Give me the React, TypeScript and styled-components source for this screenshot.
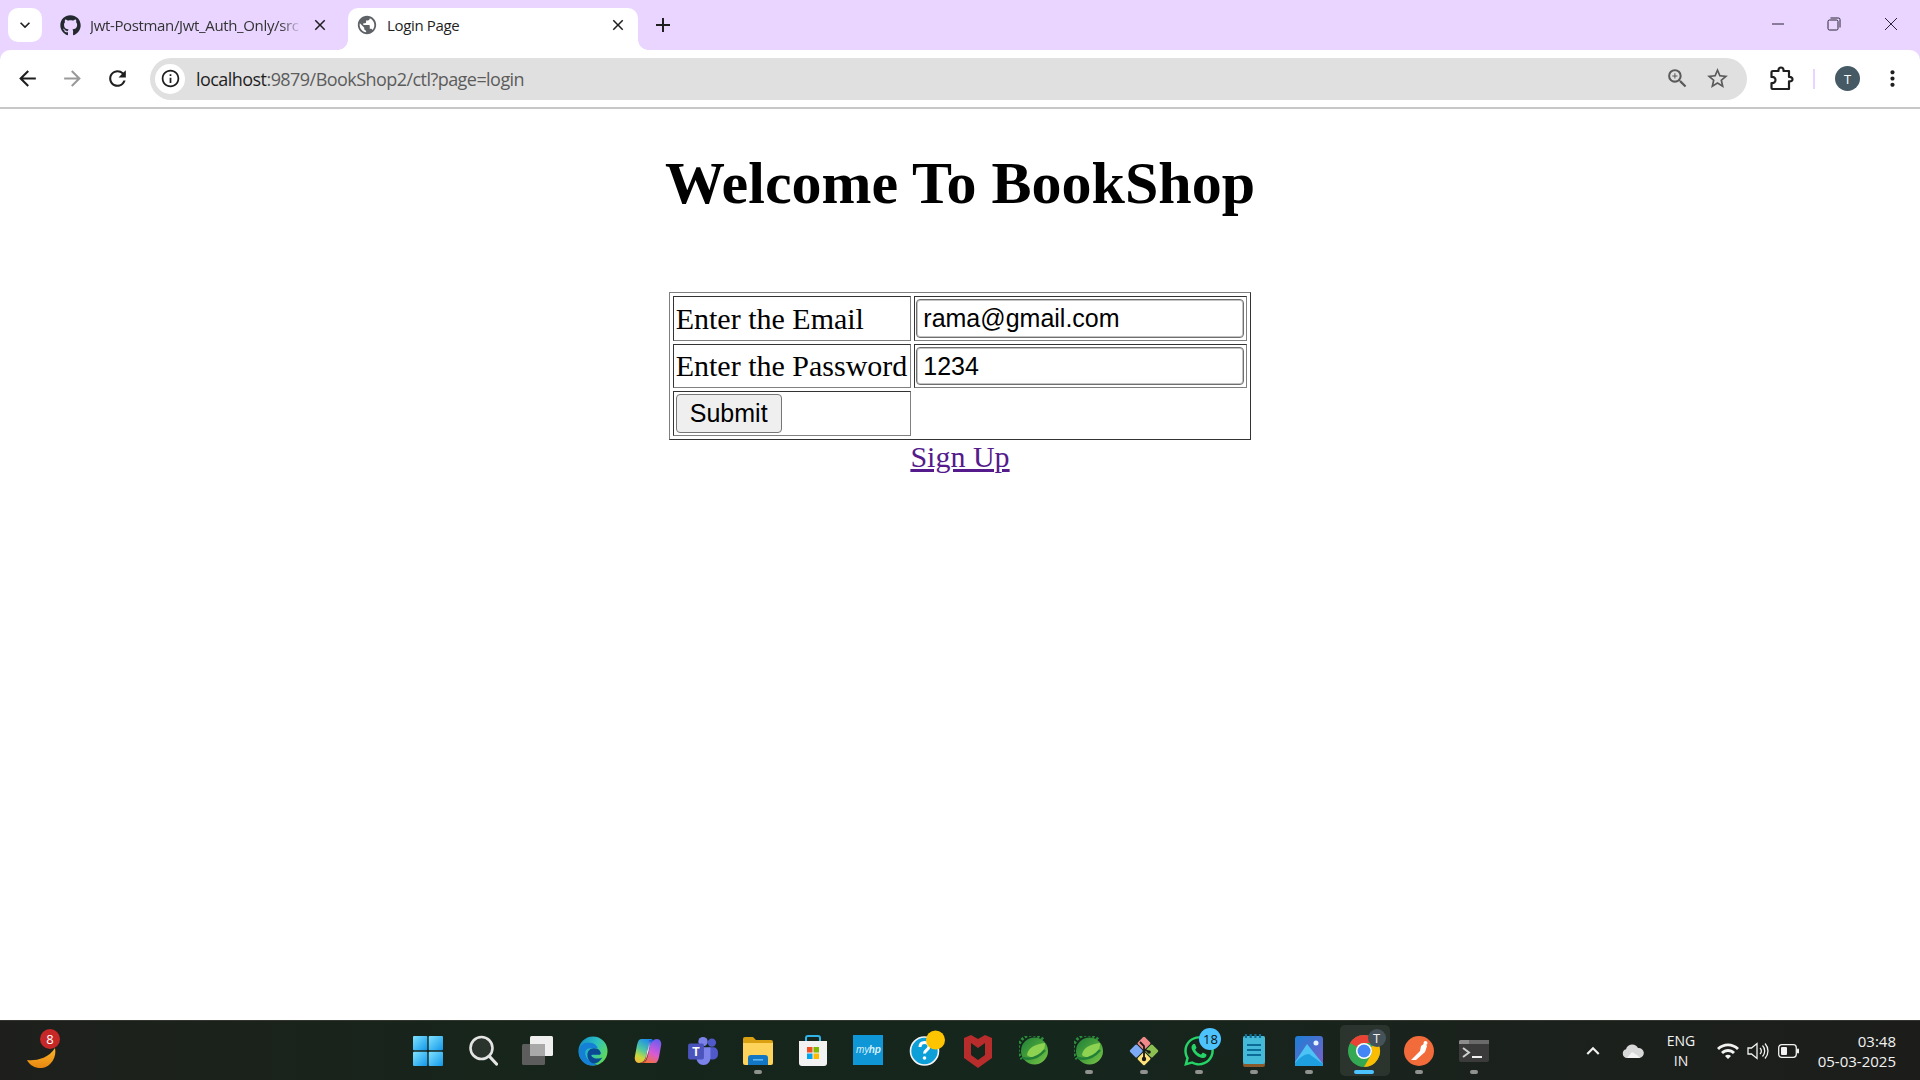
import React from 'react'
import styled, { createGlobalStyle } from 'styled-components'
import { FaGithub, FaWhatsapp } from 'react-icons/fa'
import {
  MdAdd,
  MdArrowBack,
  MdArrowForward,
  MdClose,
  MdInfoOutline,
  MdKeyboardArrowDown,
  MdKeyboardArrowUp,
  MdMoreVert,
  MdPublic,
  MdRefresh,
  MdStarBorder,
  MdWifi,
  MdZoomIn,
} from 'react-icons/md'

const UI_FONT = `"Open Sans", "Noto Sans", "Liberation Sans", sans-serif`

const GlobalStyle = createGlobalStyle`
  html, body {
    margin: 0;
    padding: 0;
    height: 100%;
    overflow: hidden;
    background: #fff;
  }
  #root {
    height: 100%;
  }
`

const Screen = styled.div`
  display: flex;
  flex-direction: column;
  height: 1080px;
  width: 1920px;
  background: #e9d5ff;
`

const TabStrip = styled.div`
  display: flex;
  align-items: flex-end;
  height: 50px;
  flex: none;
  padding-left: 8px;
  font-family: ${UI_FONT};
`

const TabSearch = styled.div`
  display: flex;
  align-items: center;
  justify-content: center;
  width: 34px;
  height: 34px;
  margin-bottom: 8px;
  border-radius: 10px;
  background: #fff;
  color: #1f1f1f;
  font-size: 20px;
`

const InactiveTab = styled.div`
  display: flex;
  align-items: center;
  width: 306px;
  height: 42px;
  padding: 0 19px 8px 18px;
  box-sizing: border-box;
  color: #333;
  font-size: 15px;
`

const ActiveTab = styled.div`
  position: relative;
  display: flex;
  align-items: center;
  width: 290px;
  height: 42px;
  padding: 0 11px 8px 8px;
  box-sizing: border-box;
  background: #fff;
  border-radius: 10px 10px 0 0;
  color: #1f1f1f;
  font-size: 15px;
  &::before,
  &::after {
    content: '';
    position: absolute;
    bottom: 0;
    width: 10px;
    height: 10px;
  }
  &::before {
    left: -10px;
    background: radial-gradient(circle at 0 0, transparent 9.5px, #fff 10px);
  }
  &::after {
    right: -10px;
    background: radial-gradient(circle at 100% 0, transparent 9.5px, #fff 10px);
  }
`

const TabLabel = styled.span`
  flex: 1;
  min-width: 0;
  margin-left: 9px;
  white-space: nowrap;
  letter-spacing: -0.35px;
`

const FadedTabLabel = styled(TabLabel)`
  mask-image: linear-gradient(to right, #000 86%, transparent 96%);
`

const NewTab = styled.div`
  display: flex;
  align-items: center;
  justify-content: center;
  width: 30px;
  height: 30px;
  margin: 0 0 10px 10px;
  font-size: 24px;
  color: #1f1f1f;
`

const WindowControls = styled.div`
  display: flex;
  margin-left: auto;
  align-self: flex-start;
  padding-top: 8px;
`

const WindowButton = styled.div`
  display: flex;
  align-items: center;
  justify-content: center;
  width: 56px;
  height: 32px;
  &:last-child {
    width: 58px;
  }
`

const Toolbar = styled.div`
  display: flex;
  align-items: center;
  flex: none;
  height: 59px;
  box-sizing: border-box;
  border-bottom: 2px solid #c7c7c7;
  background: #fff;
  border-radius: 10px 10px 0 0;
  padding-left: 5px;
  font-family: ${UI_FONT};
`

const NavButton = styled.div<{ $dim?: boolean }>`
  display: flex;
  align-items: center;
  justify-content: center;
  width: 45px;
  height: 42px;
  font-size: 25px;
  color: ${({ $dim }) => ($dim ? '#9a9a9a' : '#1f1f1f')};
`

const Omnibox = styled.div`
  display: flex;
  align-items: center;
  width: 1597px;
  height: 42px;
  margin-left: 10px;
  padding: 0 10px 0 5px;
  box-sizing: border-box;
  border-radius: 21px;
  background: #e0e0e0;
`

const InfoBadge = styled.div`
  display: flex;
  align-items: center;
  justify-content: center;
  width: 30px;
  height: 30px;
  border-radius: 50%;
  background: #fff;
  font-size: 21px;
  color: #1f1f1f;
`

const Url = styled.div`
  flex: 1;
  margin-left: 11px;
  font-size: 18px;
  letter-spacing: -0.55px;
  color: #5c5c5c;
  span {
    color: #1f1f1f;
  }
`

const OmniAction = styled.div`
  display: flex;
  align-items: center;
  justify-content: center;
  width: 40px;
  font-size: 25px;
  color: #5a5a5a;
`

const ToolbarRight = styled.div`
  display: flex;
  align-items: center;
  flex: 1;
  height: 100%;
`

const ExtensionButton = styled.div`
  display: flex;
  justify-content: center;
  width: 66px;
  padding-left: 3px;
  box-sizing: border-box;
  color: #1f1f1f;
`

const ToolbarDivider = styled.div`
  width: 2px;
  height: 20px;
  background: #e9d5ff;
`

const Avatar = styled.div`
  display: flex;
  align-items: center;
  justify-content: center;
  width: 25px;
  height: 25px;
  margin-left: 20px;
  border-radius: 50%;
  background: #455a64;
  color: #fff;
  font-size: 13px;
`

const MenuButton = styled.div`
  display: flex;
  justify-content: center;
  width: 40px;
  margin-left: 12px;
  font-size: 25px;
  color: #1f1f1f;
`

const Page = styled.main`
  flex: 1;
  min-height: 0;
  background: #fff;
  color: #000;
  font-family: "Liberation Serif", "Times New Roman", serif;
  font-size: 30px;
  text-align: center;
`

const Heading = styled.h1`
  margin: 0 0 74px;
  padding-top: 40px;
  font-size: 60px;
  line-height: 69px;
  font-weight: 700;
`

const LoginTable = styled.table`
  margin: 0 auto;
  border-collapse: separate;
  border-spacing: 3px;
  border: 1px solid;
  border-color: #808080 #333 #333 #808080;
  text-align: left;
`

const Cell = styled.td`
  padding: 2px;
  border: 1px solid;
  border-color: #333 #808080 #808080 #333;
  white-space: nowrap;
  line-height: 34px;
`

const LabelCell = styled(Cell)`
  padding-right: 3px;
`

const InputCell = styled(Cell)`
  padding-left: 1px;
`

const TextInput = styled.input<{ $height: number }>`
  display: block;
  width: 328px;
  height: ${({ $height }) => $height}px;
  box-sizing: border-box;
  padding: 0 7px 0 6px;
  border: 1px solid #6f6f6f;
  box-shadow: inset 0 0 0 1px #c4c4c4;
  border-radius: 4px;
  font-family: "Liberation Sans", Arial, sans-serif;
  font-size: 25px;
  color: #000;
  background: #fff;
`

const SubmitButton = styled.button`
  display: block;
  width: 106px;
  height: 39px;
  padding: 0;
  border: 1px solid #767676;
  border-radius: 4px;
  background: #efefef;
  font-family: "Liberation Sans", Arial, sans-serif;
  font-size: 25px;
  color: #000;
`

const SignUp = styled.a`
  display: inline-block;
  line-height: 34px;
  color: #551a8b;
  text-decoration: underline;
`

const Taskbar = styled.footer`
  display: flex;
  align-items: stretch;
  flex: none;
  height: 60px;
  box-sizing: border-box;
  border-top: 1px solid #33352f;
  background: linear-gradient(to right, #1e1f1c 0%, #17251b 25%, #15261d 55%, #1b211c 80%, #1c1d1b 100%);
  font-family: ${UI_FONT};
  color: #f2f2f2;
`

const TaskbarLeft = styled.div`
  display: flex;
  align-items: center;
  width: 400px;
  padding-left: 24px;
  box-sizing: border-box;
`

const WeatherIcon = styled.div`
  position: relative;
  width: 36px;
  height: 40px;
`

const CountBadge = styled.span<{ $bg: string; $fg: string; $size: number; $top: number; $right: number }>`
  position: absolute;
  top: ${({ $top }) => $top}px;
  right: ${({ $right }) => $right}px;
  display: flex;
  align-items: center;
  justify-content: center;
  width: ${({ $size }) => $size}px;
  height: ${({ $size }) => $size}px;
  border-radius: 50%;
  background: ${({ $bg }) => $bg};
  color: ${({ $fg }) => $fg};
  font-size: 13px;
  font-family: ${UI_FONT};
`

const TaskIcons = styled.div`
  display: flex;
  width: 1102px;
`

const TaskItem = styled.div<{ $active?: boolean }>`
  position: relative;
  display: flex;
  align-items: center;
  justify-content: center;
  flex: 1;
  &::before {
    content: '';
    position: absolute;
    inset: 4px 2px 4px 3px;
    border-radius: 5px;
    background: ${({ $active }) => ($active ? 'rgba(255, 255, 255, 0.08)' : 'transparent')};
  }
  svg {
    position: relative;
    flex: none;
  }
`

const RunDot = styled.span<{ $active?: boolean }>`
  position: absolute;
  bottom: 6px;
  left: 50%;
  width: ${({ $active }) => ($active ? 20 : 8)}px;
  height: 4px;
  margin-left: ${({ $active }) => ($active ? -10 : -4)}px;
  border-radius: 2px;
  background: ${({ $active }) => ($active ? '#4cc2ff' : '#8f928e')};
`

const MyHpTile = styled.div`
  display: flex;
  align-items: center;
  justify-content: center;
  width: 30px;
  height: 30px;
  background: #0e96d6;
  color: #d6f0fb;
  font-family: "Liberation Sans", Arial, sans-serif;
  font-size: 10px;
  font-style: italic;
  letter-spacing: -0.3px;
  position: relative;
  top: -1px;
`

const Tray = styled.div`
  display: flex;
  align-items: center;
  flex: 1;
  padding-left: 76px;
`

const TrayIcon = styled.div<{ $width: number }>`
  display: flex;
  align-items: center;
  justify-content: center;
  width: ${({ $width }) => $width}px;
  font-size: 26px;
`

const LangBox = styled.div`
  width: 46px;
  margin-right: 9px;
  text-align: center;
  font-size: 14px;
  line-height: 20px;
`

const Clock = styled.div`
  margin-left: auto;
  padding-right: 24px;
  text-align: right;
  font-size: 15px;
  line-height: 20px;
`

const WinGlyph = ({ children }: { children: React.ReactNode }) => (
  <svg width="14" height="14" viewBox="0 0 14 14" fill="none" stroke="#2b2433" strokeWidth="1">
    {children}
  </svg>
)

const ExtensionIcon = () => (
  <svg width="26" height="26" viewBox="0 0 26 26" fill="none" stroke="#1f1f1f" strokeWidth="2.200" strokeLinejoin="round">
    <path d="M4 5h5.500c-.3-2.500 1.200-3.500 2.500-3.500s2.800 1 2.500 3.500H20v6c2.500-.3 3.500 1 3.500 2.200S22.500 15.700 20 15.400V23H3.500c-.5 0-1-.5-1-1v-5c2.500.3 4-1 4-3s-1.500-3.300-4-3V6c0-.5.500-1 1.500-1z" />
  </svg>
)

const StartIcon = () => (
  <svg width="30" height="30" viewBox="0 0 30 30">
    <defs>
      <linearGradient id="start" x1="0" y1="0" x2="1" y2="1">
        <stop offset="0" stopColor="#7fe3ff" />
        <stop offset="1" stopColor="#1297ea" />
      </linearGradient>
    </defs>
    <rect x="0" y="0" width="14.3" height="14.3" rx="1" fill="url(#start)" />
    <rect x="15.7" y="0" width="14.3" height="14.3" rx="1" fill="url(#start)" />
    <rect x="0" y="15.7" width="14.3" height="14.3" rx="1" fill="url(#start)" />
    <rect x="15.7" y="15.7" width="14.3" height="14.3" rx="1" fill="url(#start)" />
  </svg>
)

const SearchIcon = () => (
  <svg width="30" height="32" viewBox="0 0 30 32" fill="none">
    <circle cx="13.5" cy="13" r="11" fill="#2b332d" stroke="#e4e4e4" strokeWidth="2.6" />
    <path d="M22 22l6.500 7" stroke="#e4e4e4" strokeWidth="3.2" strokeLinecap="round" />
  </svg>
)

const TaskViewIcon = () => (
  <svg width="32" height="30" viewBox="0 0 32 30">
    <rect x="8" y="0" width="23" height="20" rx="1.5" fill="#efefef" />
    <rect x="0" y="8" width="23" height="21" rx="1.5" fill="#5d5d5d" />
    <rect x="8" y="8" width="15" height="12" fill="#a9a9a9" />
  </svg>
)

const EdgeIcon = () => (
  <svg width="30" height="30" viewBox="0 0 32 32">
    <defs>
      <linearGradient id="edgeTop" x1="0" y1="0" x2="1" y2="0.6">
        <stop offset="0" stopColor="#0c87c9" />
        <stop offset="0.55" stopColor="#2dc2c0" />
        <stop offset="1" stopColor="#5fd85a" />
      </linearGradient>
    </defs>
    <circle cx="16" cy="16" r="15.500" fill="url(#edgeTop)" />
    <path d="M1 17C1 10 6 7 11 7c6 0 9 3 10 6H13c-4 0-6 3-5 7 1 5 6 9 13 10-2 1-4 1.500-6 1.500C7 31.500 1 25 1 17z" fill="#1481d6" />
    <path d="M10 20c0-4 3-7 7-7 3 0 6 1 7 4 1 2 0 3-2 3h-7c-1 0-1 1 0 2 2 2 7 3 11 1-3 5-7 7-10 6-4-1-6-5-6-9z" fill="#0a4a94" />
  </svg>
)

const CopilotIcon = () => (
  <svg width="28" height="26" viewBox="0 0 28 26">
    <defs>
      <linearGradient id="copA" x1="0.600" y1="0" x2="0.200" y2="1">
        <stop offset="0" stopColor="#1f8fe8" />
        <stop offset="0.45" stopColor="#4fc7a0" />
        <stop offset="0.75" stopColor="#c8d83c" />
        <stop offset="1" stopColor="#f6b73c" />
      </linearGradient>
      <linearGradient id="copB" x1="0.700" y1="0" x2="0.300" y2="1">
        <stop offset="0" stopColor="#6d5cf0" />
        <stop offset="0.55" stopColor="#d65ad8" />
        <stop offset="1" stopColor="#f3703f" />
      </linearGradient>
      <linearGradient id="copC" x1="0.600" y1="0" x2="0.400" y2="1">
        <stop offset="0" stopColor="#1a5fd8" />
        <stop offset="0.5" stopColor="#f4e6f4" />
        <stop offset="1" stopColor="#f0503a" />
      </linearGradient>
    </defs>
    <path d="M7 1h12c-3 1-4 4-5 8l-2 9c-1 4-3 7-7 7-3 0-5-3-4-7L3 7c1-4 2-6 4-6z" fill="url(#copA)" />
    <path d="M21 25H9c3-1 4-4 5-8l2-9c1-4 3-7 7-7 3 0 5 3 4 7l-2 11c-1 4-2 6-4 6z" fill="url(#copB)" />
    <path d="M15 2h6c-3 1-4 3-5 6l-3 11c-1 3-2 5-4 6H7c3-1 4-3 5-7l2-9c.3-3 .5-5 1-7z" fill="url(#copC)" />
  </svg>
)

const TeamsIcon = () => (
  <svg width="30" height="28" viewBox="0 0 32 30">
    <circle cx="25.500" cy="6" r="4.500" fill="#5059c9" />
    <rect x="20" y="11" width="12" height="13" rx="5" fill="#5059c9" />
    <circle cx="16" cy="5" r="5" fill="#7b83eb" />
    <path d="M9 11h15v11c0 4.500-3 8-7.500 8S9 26.500 9 22z" fill="#7b83eb" />
    <rect x="0" y="7" width="17" height="17" rx="2" fill="#4b53bc" />
    <text x="8.500" y="20" fill="#fff" fontSize="13" fontFamily="Liberation Sans, sans-serif" fontWeight="700" textAnchor="middle">T</text>
  </svg>
)

const ExplorerIcon = () => (
  <svg width="30" height="28" viewBox="0 0 30 28">
    <path d="M0 2a2 2 0 0 1 2-2h8l3 3h15a2 2 0 0 1 2 2v3H0z" fill="#d9a011" />
    <path d="M0 6h30v20a2 2 0 0 1-2 2H2a2 2 0 0 1-2-2z" fill="#fdd35c" />
    <path d="M5 28v-7a3 3 0 0 1 3-3h14a3 3 0 0 1 3 3v7z" fill="#1376c4" />
    <rect x="10" y="22" width="10" height="1.600" fill="#5bb6ef" />
  </svg>
)

const StoreIcon = () => (
  <svg width="30" height="32" viewBox="0 0 30 32">
    <path d="M8 7V3a2 2 0 0 1 2-2h10a2 2 0 0 1 2 2v4" fill="none" stroke="#2fb5ea" strokeWidth="2" />
    <path d="M1 6h28v22a3 3 0 0 1-3 3H4a3 3 0 0 1-3-3z" fill="#f2f2f2" />
    <rect x="9" y="12" width="5.500" height="5.500" fill="#f25022" />
    <rect x="15.500" y="12" width="5.500" height="5.500" fill="#7fba00" />
    <rect x="9" y="18.500" width="5.500" height="5.500" fill="#00a4ef" />
    <rect x="15.500" y="18.500" width="5.500" height="5.500" fill="#ffb900" />
  </svg>
)

const HelpIcon = () => (
  <svg width="44" height="44" viewBox="0 0 44 44">
    <circle cx="23.500" cy="22" r="14" fill="#0d9fd8" stroke="#f5f5f5" strokeWidth="1.600" />
    <path d="M19 18c0-3 2-4.500 4.500-4.500S28 15 28 17.500c0 3.500-4.500 3.500-4.500 7" fill="none" stroke="#fff" strokeWidth="3" />
    <circle cx="23.500" cy="29" r="1.800" fill="#fff" />
    <circle cx="34.500" cy="11" r="9.500" fill="#ffc400" />
  </svg>
)

const McAfeeIcon = () => (
  <svg width="28" height="34" viewBox="0 0 28 34">
    <path d="M0 4l7-3 7 4 7-4 7 3v20l-14 10L0 24zm7 5v12l7 5 7-5V9l-7 5z" fill="#b92c2c" />
  </svg>
)

const SpringIcon = ({ id }: { id: string }) => (
  <svg width="30" height="30" viewBox="0 0 30 30">
    <defs>
      <linearGradient id={id} x1="0" y1="0" x2="1" y2="1">
        <stop offset="0" stopColor="#1f7f38" />
        <stop offset="0.6" stopColor="#4fa83c" />
        <stop offset="1" stopColor="#7cc64a" />
      </linearGradient>
    </defs>
    <path d="M24 3.500A14 14 0 0 0 3 23" fill="none" stroke="#2a8f3b" strokeWidth="3" strokeDasharray="2.500 1.800" />
    <circle cx="15.500" cy="15" r="13.500" fill={`url(#${id})`} />
    <path d="M8 19C9 11 17 8 26 7c0 8-4 13-10 14-3 .5-6 0-8-2z" fill="#8ed252" />
    <path d="M4 22c8 2 16-1 22-8" fill="none" stroke="#217f38" strokeWidth="2.500" />
  </svg>
)

const GitIcon = () => (
  <svg width="30" height="30" viewBox="0 0 30 30">
    <g transform="rotate(45 15 15)">
      <rect x="4.500" y="4.500" width="10" height="10" rx="1.500" fill="#f08a8a" />
      <rect x="15.500" y="4.500" width="10" height="10" rx="1.500" fill="#8cc152" />
      <rect x="4.500" y="15.500" width="10" height="10" rx="1.500" fill="#7daaf7" />
      <rect x="15.500" y="15.500" width="10" height="10" rx="1.500" fill="#ffe27a" />
    </g>
    <path d="M11 6l4 4v13M15 13l5 3" fill="none" stroke="#1a1a1a" strokeWidth="1.800" />
    <circle cx="15" cy="23" r="2.200" fill="#1a1a1a" />
    <circle cx="20" cy="16" r="1.800" fill="#1a1a1a" />
  </svg>
)

const NotepadIcon = () => (
  <svg width="24" height="34" viewBox="0 0 24 34">
    <rect x="1" y="2" width="22" height="31" rx="2" fill="#8a5a2b" />
    <rect x="1" y="2" width="22" height="28" rx="2" fill="#45b9d8" />
    <path d="M4 0v4M8.700 0v4M13.400 0v4M18 0v4" stroke="#0f6f97" strokeWidth="2.200" />
    <path d="M5 11h14M5 16h14M5 21h14" stroke="#0d6b99" strokeWidth="2.200" />
  </svg>
)

const PhotosIcon = () => (
  <svg width="28" height="30" viewBox="0 0 28 30">
    <defs>
      <linearGradient id="photoBg" x1="0" y1="0" x2="1" y2="1">
        <stop offset="0" stopColor="#1b7fd6" />
        <stop offset="1" stopColor="#7b5ec8" />
      </linearGradient>
    </defs>
    <rect width="28" height="30" rx="3" fill="url(#photoBg)" />
    <circle cx="21" cy="7" r="2.500" fill="#e6f4ff" />
    <path d="M0 26L12 8l16 20v2H0z" fill="#4cc2f5" />
    <path d="M0 30v-3c5-6 10-9 14-9l14 10v2z" fill="#1e9fe0" />
  </svg>
)

const ChromeIcon = () => (
  <svg width="34" height="34" viewBox="0 0 34 34">
    <circle cx="17" cy="17" r="16" fill="#34a853" />
    <path d="M17 1a16 16 0 0 1 13.860 8H17a8 8 0 0 0-6.930 4L3.140 9A16 16 0 0 1 17 1z" fill="#ea4335" />
    <path d="M30.860 9A16 16 0 0 1 17 33l6.930-12A8 8 0 0 0 23.930 13z" fill="#fbbc04" />
    <circle cx="17" cy="17" r="8" fill="#fff" />
    <circle cx="17" cy="17" r="6.500" fill="#4285f4" />
  </svg>
)

const PostmanIcon = () => (
  <svg width="30" height="30" viewBox="0 0 30 30">
    <circle cx="15" cy="15" r="15" fill="#f26b3a" />
    <path d="M7 24l9-9 1-5 4-3 2 3-2 6-9 8z" fill="#fff" />
    <circle cx="21.500" cy="7" r="2" fill="#fff" />
  </svg>
)

const TerminalIcon = () => (
  <svg width="30" height="22" viewBox="0 0 30 22">
    <rect width="30" height="22" rx="2" fill="#3b3b3b" />
    <path d="M0 2a2 2 0 0 1 2-2h28v4H0z" fill="#6a6a6a" />
    <path d="M2 0h8v4H0V2a2 2 0 0 1 2-2z" fill="#8d8d8d" />
    <path d="M4 8l6 4.500L4 17" fill="none" stroke="#cfcfcf" strokeWidth="2" />
    <rect x="13" y="16" width="10" height="2" fill="#f0f0f0" />
  </svg>
)

const CloudIcon = () => (
  <svg width="22" height="14" viewBox="0 0 22 14">
    <path d="M5 14a4.500 4.500 0 0 1-1-8.800A6.500 6.500 0 0 1 16 4a4.800 4.800 0 0 1 1.500 10z" fill="#d8d8d8" />
    <path d="M5 14l5-6 5 3 3 3z" fill="#f4f4f4" />
  </svg>
)

const SpeakerIcon = () => (
  <svg width="22" height="18" viewBox="0 0 22 18" fill="none" stroke="#f2f2f2" strokeWidth="1.300">
    <path d="M1 6h3.500L10 1.500v15L4.500 12H1z" />
    <path d="M13 6a4 4 0 0 1 0 6M15.500 3.500a8 8 0 0 1 0 11M18 1.500a11 11 0 0 1 0 15" />
  </svg>
)

const BatteryIcon = () => (
  <svg width="21" height="14" viewBox="0 0 21 14">
    <rect x="0.700" y="0.700" width="17.600" height="12.600" rx="3" fill="none" stroke="#f2f2f2" strokeWidth="1.300" />
    <rect x="3" y="3" width="6" height="8" rx="1" fill="#f2f2f2" />
    <rect x="19" y="4.500" width="2" height="5" rx="1" fill="#f2f2f2" />
  </svg>
)

type TaskEntry = {
  icon: React.ReactNode
  running?: boolean
  active?: boolean
  badge?: React.ReactNode
}

const taskEntries: TaskEntry[] = [
  { icon: <StartIcon /> },
  { icon: <SearchIcon /> },
  { icon: <TaskViewIcon /> },
  { icon: <EdgeIcon /> },
  { icon: <CopilotIcon /> },
  { icon: <TeamsIcon /> },
  { icon: <ExplorerIcon />, running: true },
  { icon: <StoreIcon /> },
  { icon: <MyHpTile>my<b>hp</b></MyHpTile> },
  { icon: <HelpIcon /> },
  { icon: <McAfeeIcon /> },
  { icon: <SpringIcon id="springA" /> },
  { icon: <SpringIcon id="springB" />, running: true },
  { icon: <GitIcon />, running: true },
  {
    icon: <FaWhatsapp size={34} color="#25d366" />,
    running: true,
    badge: <CountBadge $bg="#4cc2ff" $fg="#111" $size={22} $top={7} $right={5}>18</CountBadge>,
  },
  { icon: <NotepadIcon />, running: true },
  { icon: <PhotosIcon />, running: true },
  {
    icon: <ChromeIcon />,
    running: true,
    active: true,
    badge: <CountBadge $bg="#45525a" $fg="#eee" $size={18} $top={8} $right={6}>T</CountBadge>,
  },
  { icon: <PostmanIcon />, running: true },
  { icon: <TerminalIcon />, running: true },
]

const App = () => {
  return (
    <Screen>
      <GlobalStyle />
      <TabStrip>
        <TabSearch>
          <MdKeyboardArrowDown />
        </TabSearch>
        <InactiveTab>
          <FaGithub size={21} color="#24292f" />
          <FadedTabLabel>Jwt-Postman/Jwt_Auth_Only/src</FadedTabLabel>
          <MdClose size={18} color="#1f1f1f" />
        </InactiveTab>
        <ActiveTab>
          <MdPublic size={22} color="#5f6368" />
          <TabLabel>Login Page</TabLabel>
          <MdClose size={18} />
        </ActiveTab>
        <NewTab>
          <MdAdd />
        </NewTab>
        <WindowControls>
          <WindowButton>
            <WinGlyph>
              <path d="M1 7h12" />
            </WinGlyph>
          </WindowButton>
          <WindowButton>
            <WinGlyph>
              <rect x="1" y="3" width="10" height="10" rx="1.500" />
              <path d="M3.500 1h8a1.500 1.500 0 0 1 1.500 1.500v8" />
            </WinGlyph>
          </WindowButton>
          <WindowButton>
            <WinGlyph>
              <path d="M1 1l12 12M13 1L1 13" />
            </WinGlyph>
          </WindowButton>
        </WindowControls>
      </TabStrip>

      <Toolbar>
        <NavButton>
          <MdArrowBack />
        </NavButton>
        <NavButton $dim>
          <MdArrowForward />
        </NavButton>
        <NavButton>
          <MdRefresh />
        </NavButton>
        <Omnibox>
          <InfoBadge>
            <MdInfoOutline />
          </InfoBadge>
          <Url>
            <span>localhost</span>:9879/BookShop2/ctl?page=login
          </Url>
          <OmniAction>
            <MdZoomIn />
          </OmniAction>
          <OmniAction>
            <MdStarBorder />
          </OmniAction>
        </Omnibox>
        <ToolbarRight>
          <ExtensionButton>
            <ExtensionIcon />
          </ExtensionButton>
          <ToolbarDivider />
          <Avatar>T</Avatar>
          <MenuButton>
            <MdMoreVert />
          </MenuButton>
        </ToolbarRight>
      </Toolbar>

      <Page>
        <Heading>Welcome To BookShop</Heading>
        <form>
          <LoginTable>
            <tbody>
              <tr>
                <LabelCell>Enter the Email</LabelCell>
                <InputCell>
                  <TextInput type="text" $height={39} defaultValue="rama@gmail.com" />
                </InputCell>
              </tr>
              <tr>
                <LabelCell>Enter the Password</LabelCell>
                <InputCell>
                  <TextInput type="text" $height={38} defaultValue="1234" />
                </InputCell>
              </tr>
              <tr>
                <LabelCell>
                  <SubmitButton type="button">Submit</SubmitButton>
                </LabelCell>
              </tr>
            </tbody>
          </LoginTable>
        </form>
        <SignUp href="#">Sign Up</SignUp>
      </Page>

      <Taskbar>
        <TaskbarLeft>
          <WeatherIcon>
            <svg width="36" height="40" viewBox="0 0 36 40">
              <defs>
                <linearGradient id="moon" x1="0" y1="0" x2="0" y2="1">
                  <stop offset="0" stopColor="#fbb62c" />
                  <stop offset="1" stopColor="#e8860f" />
                </linearGradient>
              </defs>
              <path d="M3 29c8 1 21-1 28-12 2 9-4 19-13 20-6 .5-12-2-15-8z" fill="url(#moon)" />
            </svg>
            <CountBadge $bg="#c62828" $fg="#fff" $size={20} $top={-2} $right={0}>8</CountBadge>
          </WeatherIcon>
        </TaskbarLeft>
        <TaskIcons>
          {taskEntries.map((entry, index) => (
            <TaskItem key={index} $active={entry.active}>
              {entry.icon}
              {entry.badge}
              {entry.running && <RunDot $active={entry.active} />}
            </TaskItem>
          ))}
        </TaskIcons>
        <Tray>
          <TrayIcon $width={30}>
            <MdKeyboardArrowUp />
          </TrayIcon>
          <TrayIcon $width={50}>
            <CloudIcon />
          </TrayIcon>
          <LangBox>
            ENG
            <br />
            IN
          </LangBox>
          <TrayIcon $width={30}>
            <MdWifi size={24} />
          </TrayIcon>
          <TrayIcon $width={30}>
            <SpeakerIcon />
          </TrayIcon>
          <TrayIcon $width={30}>
            <BatteryIcon />
          </TrayIcon>
          <Clock>
            03:48
            <br />
            05-03-2025
          </Clock>
        </Tray>
      </Taskbar>
    </Screen>
  )
}

export default App
